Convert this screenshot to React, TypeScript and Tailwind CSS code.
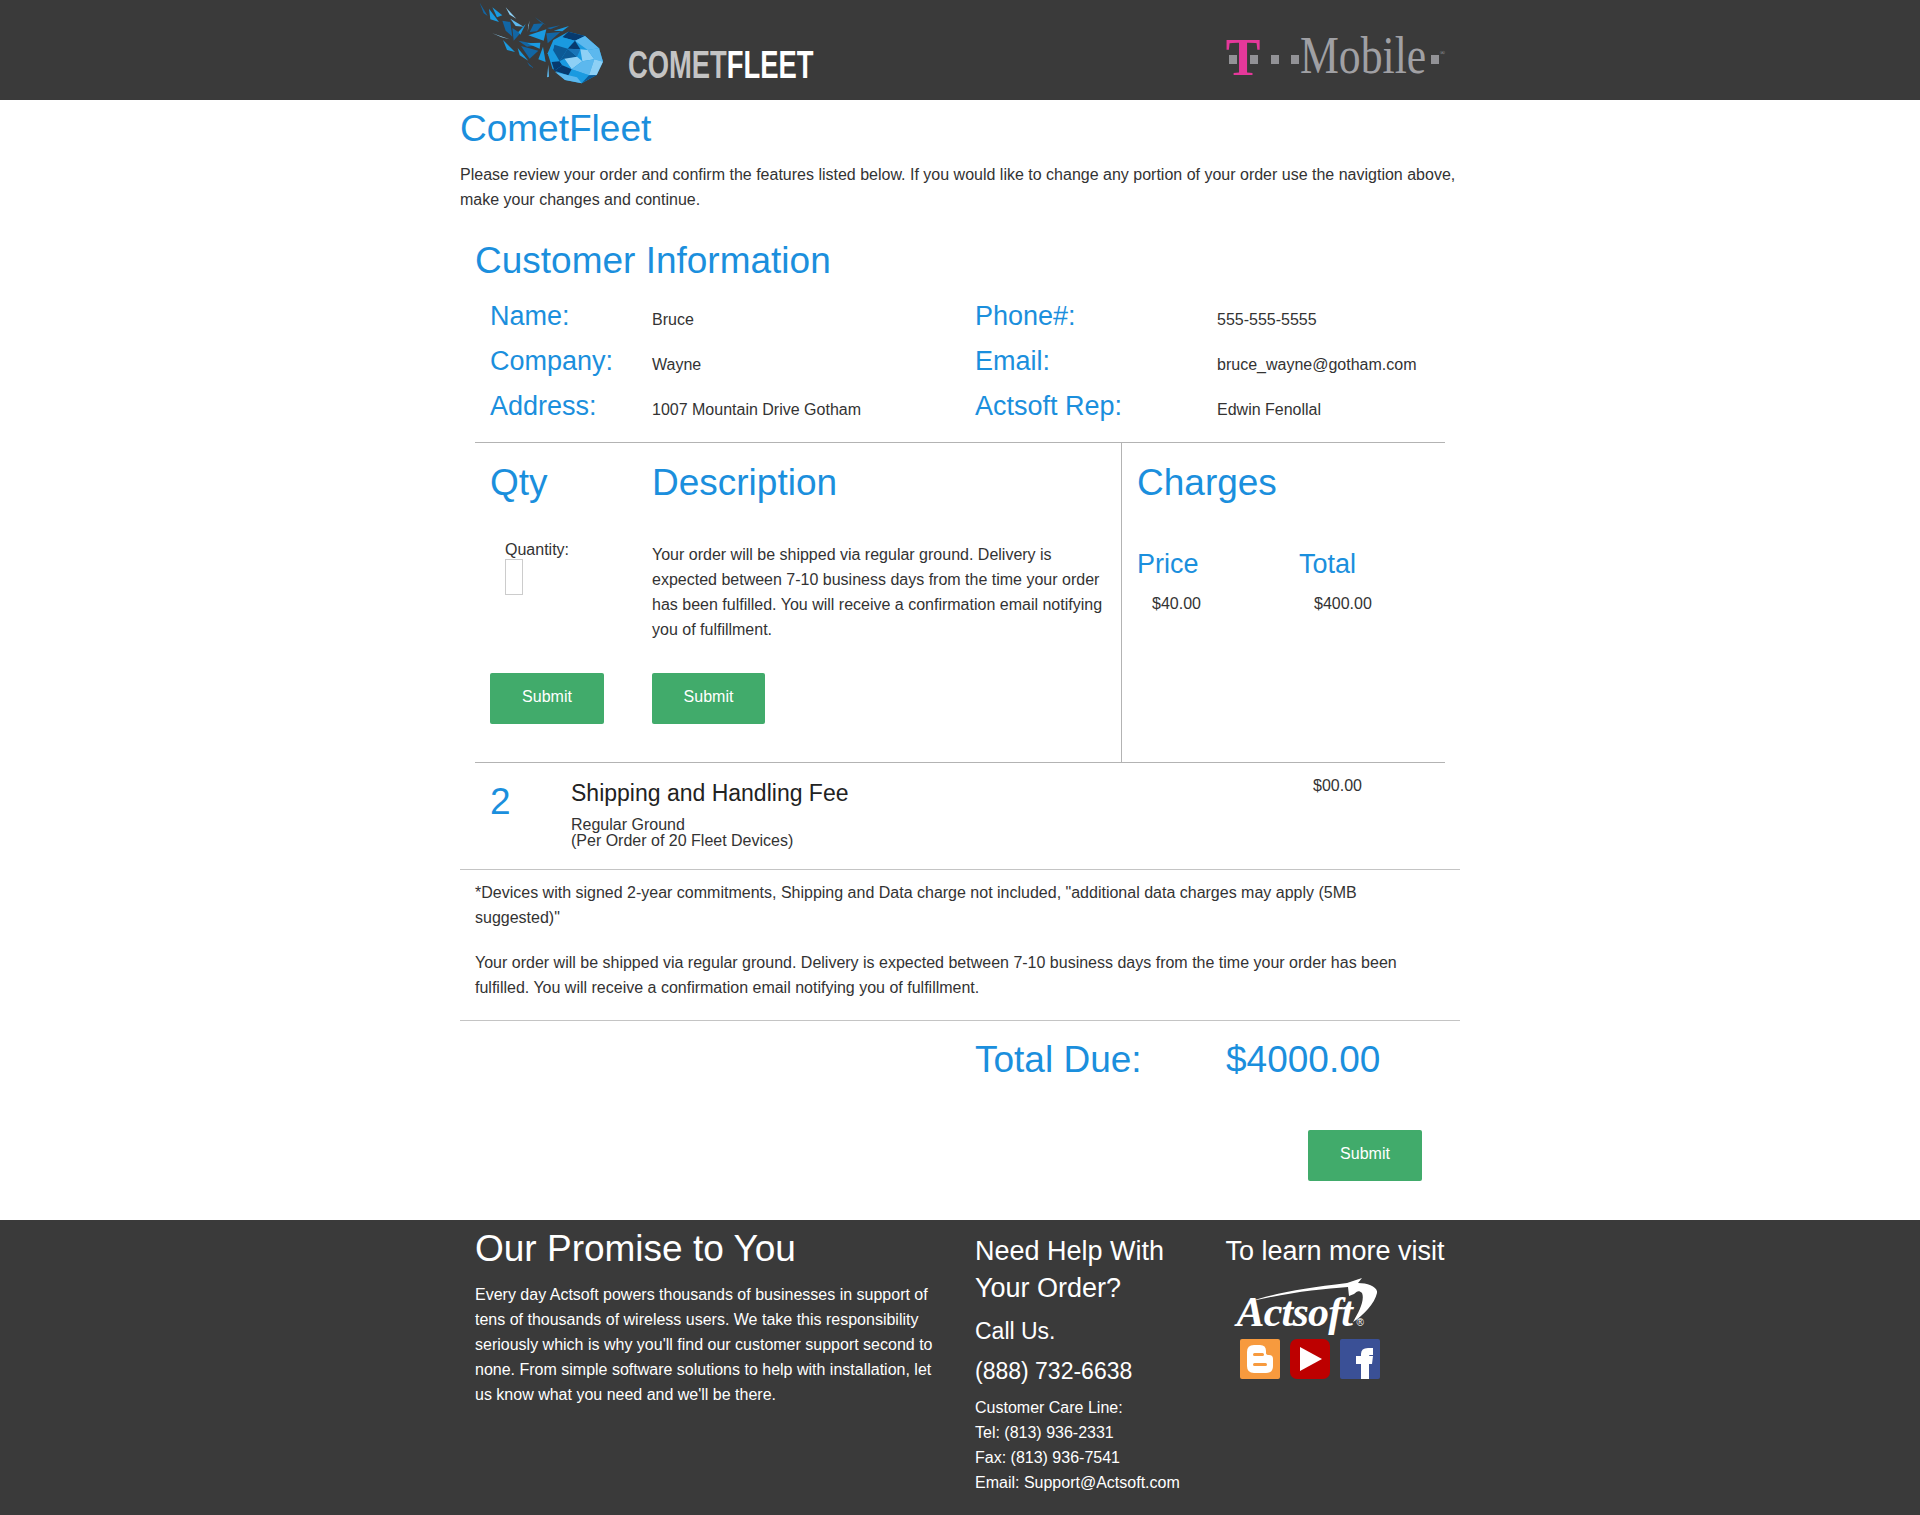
const sans = "font-['Liberation_Sans',Arial,sans-serif]";

function SubmitButton({ wide }: { wide?: boolean }) {
  return (
    <button
      className={`${wide ? "w-[114px]" : "w-[113px]"} h-[51px] bg-[#41ab6b] rounded-[2px] text-white text-[16px] leading-[46px] pb-[3px]`}
    >
      Submit
    </button>
  );
}

function Comet() {
  const tail: [string, string][] = [
    ["14,8 38,48 26,40", "#1266a4"],
    ["42,26 72,66 46,58", "#1a9ae0"],
    ["52,22 82,46 66,52", "#1a9ae0"],
    ["92,22 124,56 104,44", "#8ed0f5"],
    ["106,56 146,80 122,78", "#5cb8ee"],
    ["82,62 106,66 112,110 92,92", "#1266a4"],
    ["112,84 136,100 116,122", "#1266a4"],
    ["152,72 136,104 130,96", "#1a9ae0"],
    ["164,62 158,96 160,76", "#8ed0f5"],
    ["180,52 214,76 196,66", "#1266a4"],
    ["164,96 176,72 206,70 186,94", "#1266a4"],
    ["160,106 214,88 206,122", "#1a9ae0"],
    ["52,100 104,118 80,112", "#8ed0f5"],
    ["84,120 120,156 96,150", "#1a9ae0"],
    ["130,122 196,134 156,140", "#1266a4"],
    ["156,130 196,128 194,146", "#1a9ae0"],
    ["128,144 160,182 134,166", "#1a9ae0"],
    ["138,138 190,152 164,176", "#1266a4"],
    ["214,100 256,96 218,130", "#1266a4"],
    ["216,84 256,76 226,88", "#1266a4"],
    ["236,92 282,78 262,94", "#1a9ae0"],
    ["204,140 212,186 190,178", "#1a9ae0"],
    ["156,186 176,204 164,198", "#1266a4"],
    ["220,194 222,230 216,232", "#5cb8ee"],
  ];
  const facets: [string, string][] = [
    ["280,95 330,108 372,145 384,185 365,225 320,250 270,240 232,205 218,160 235,120", "#1a9ae0"],
    ["280,95 330,108 300,122 262,112", "#073a6e"],
    ["262,112 300,122 278,146 238,134", "#1a9ae0"],
    ["238,134 278,146 254,184 234,150", "#0c5a96"],
    ["218,160 238,134 234,150 230,186", "#1a9ae0"],
    ["230,186 254,184 262,196 238,212", "#073a6e"],
    ["300,122 330,108 372,145 338,150", "#5cb8ee"],
    ["278,146 300,122 316,148", "#073a6e"],
    ["254,184 278,146 306,170", "#0c5a96"],
    ["278,146 316,148 306,170", "#1a75b8"],
    ["316,148 338,150 358,178 322,184", "#8ed0f5"],
    ["338,150 372,145 384,185 358,178", "#5cb8ee"],
    ["306,170 322,184 290,208 268,176", "#8ed0f5"],
    ["254,184 268,176 290,208 262,196", "#1a9ae0"],
    ["238,212 262,196 290,208 280,226", "#073a6e"],
    ["322,184 358,178 342,226 290,208", "#5cb8ee"],
    ["358,178 384,185 365,225 342,226", "#8ed0f5"],
    ["290,208 342,226 320,250 306,232", "#1a9ae0"],
    ["280,226 306,232 320,250 270,240 240,216", "#5cb8ee"],
    ["320,250 342,226 365,225", "#0c5a96"],
  ];
  return (
    <svg viewBox="0 0 420 270" className="w-[140px] h-[90px] shrink-0">
      {tail.map(([points, fill], i) => (
        <polygon key={i} points={points} fill={fill} />
      ))}
      {facets.map(([points, fill], i) => (
        <polygon key={i} points={points} fill={fill} />
      ))}
    </svg>
  );
}

function TMobile() {
  const square = "w-[8px] h-[9px] bg-[#929296]";
  return (
    <div className="flex items-center h-[60px] text-[#a0a0a4] font-['Liberation_Serif',serif]">
      <div className="relative w-[29px] flex justify-between mt-[5px]">
        <span className={square} />
        <span className={square} />
        <span className="absolute left-[-3px] w-[35px] top-[-23px] text-center text-[#e5389a] text-[52px] leading-[52px] font-bold">
          T
        </span>
      </div>
      <span className={`${square} ml-[13px] mt-[5px]`} />
      <span className={`${square} ml-[12px] mt-[5px]`} />
      <span className="w-[125px] ml-[1px] mb-[2px] text-[52px] leading-[60px] origin-left scale-x-[0.84] whitespace-nowrap">
        Mobile
      </span>
      <span className={`${square} ml-[6px] mt-[5px]`} />
      <span className="text-[7px] leading-none mb-[8px] ml-[1px]">®</span>
    </div>
  );
}

function Actsoft() {
  return (
    <div className="relative w-[142px] h-[55px] ml-[9px] mt-[8px]">
      <svg viewBox="0 0 142 55" className="absolute left-0 top-0 w-[142px] h-[55px]">
        <path
          d="M13 24 C40 15 70 10 112 5 L127 0 L123 5 C133 5 143 9 142 15 C140 25 128 38 118 44 C124 34 130 22 127 15 C124 12 122 13 119 16 L114 18 L113 9 C85 11 50 15 13 24 Z"
          fill="#fff"
        />
      </svg>
      <span className="absolute left-[2px] top-[12px] text-white italic font-bold font-['Liberation_Serif',serif] text-[42px] leading-[44px] tracking-[-0.8px]">
        Actsoft
      </span>
      <span className="absolute left-[122px] top-[40px] text-white text-[10px] leading-none">®</span>
    </div>
  );
}

function Socials() {
  return (
    <div className="flex gap-[10px] pl-[14px] pt-[6px]">
      <svg viewBox="0 0 40 40" className="w-[40px] h-[40px]">
        <rect width="40" height="40" rx="2" fill="#f79a3e" />
        <path
          d="M14 6 H20 Q26 6 26 12 V14 Q26 16 29 16 Q33 16 33 20 V27 Q33 34 26 34 H14 Q7 34 7 27 V13 Q7 6 14 6 Z"
          fill="#fff"
        />
        <rect x="13" y="14" width="11" height="3" rx="1.5" fill="#f79a3e" />
        <rect x="13" y="24" width="14" height="3" rx="1.5" fill="#f79a3e" />
      </svg>
      <svg viewBox="0 0 40 40" className="w-[40px] h-[40px]">
        <rect width="40" height="40" rx="7" fill="#bd0000" />
        <polygon points="10,8 32,20 10,32" fill="#fff" />
      </svg>
      <svg viewBox="0 0 40 40" className="w-[40px] h-[40px]">
        <rect width="40" height="40" rx="2" fill="#3a5096" />
        <path d="M21 40 V25 H16 V17 H21 V15 Q21 9 28 9 H33 V16 H30 Q29 16 29 17 H33 L32 25 H29 V40 Z" fill="#fff" />
      </svg>
    </div>
  );
}

export default function App() {
  const heading = "text-[37px] leading-[40px] text-[#1b8fdd]";
  const label = "text-[27px] leading-[45px] text-[#1b8fdd]";
  const value = "text-[16px] leading-[39px] pt-[6px] text-[#333]";

  return (
    <div className={`${sans} text-[16px] text-[#333] bg-white min-h-[1515px]`}>
      <header className="bg-[#3a3a3a] h-[100px]">
        <div className="w-[1000px] mx-auto flex justify-between px-[15px]">
          <div className="flex">
            <Comet />
            <span className="w-[186px] text-[38px] leading-[40px] font-bold mt-[45px] ml-[13px] origin-left scale-x-[0.72] whitespace-nowrap text-[#c4c4c4]">
              COMET<span className="text-white">FLEET</span>
            </span>
          </div>
          <div className="pt-[27px]">
            <TMobile />
          </div>
        </div>
      </header>

      <main className="w-[1000px] mx-auto">
        <h1 className={`${heading} mt-[9px]`}>CometFleet</h1>
        <p className="leading-[25px] mt-[13px]">
          Please review your order and confirm the features listed below. If you would like to change any portion of
          your order use the navigtion above, make your changes and continue.
        </p>

        <section className="px-[15px] mt-[29px]">
          <h2 className={heading}>Customer Information</h2>
          <div className="grid grid-cols-[162px_323px_242px_1fr] pl-[15px] mt-[13px] mb-[13px]">
            <div className={label}>Name:</div>
            <div className={value}>Bruce</div>
            <div className={label}>Phone#:</div>
            <div className={value}>555-555-5555</div>
            <div className={label}>Company:</div>
            <div className={value}>Wayne</div>
            <div className={label}>Email:</div>
            <div className={value}>bruce_wayne@gotham.com</div>
            <div className={label}>Address:</div>
            <div className={value}>1007 Mountain Drive Gotham</div>
            <div className={label}>Actsoft Rep:</div>
            <div className={value}>Edwin Fenollal</div>
          </div>

          <div className="flex h-[321px] border-y border-[#b3b3b3]">
            <div className="w-[647px] border-r border-[#b3b3b3] pl-[15px] pt-[20px] grid grid-cols-[162px_1fr] grid-rows-[40px_170px_51px]">
              <div className={heading}>Qty</div>
              <div className={heading}>Description</div>
              <div className="pl-[15px] pt-[38px]">
                <div className="leading-[18px] text-[16px]">Quantity:</div>
                <input className="block w-[18px] h-[36px] border border-[#ccc] bg-white" />
              </div>
              <p className="pt-[39px] leading-[25px] pr-[14px]">
                Your order will be shipped via regular ground. Delivery is expected between 7-10 business days from the
                time your order has been fulfilled. You will receive a confirmation email notifying you of fulfillment.
              </p>
              <SubmitButton wide />
              <SubmitButton />
            </div>
            <div className="flex-1 pl-[15px] pt-[20px]">
              <div className={heading}>Charges</div>
              <div className="grid grid-cols-[162px_1fr] mt-[45px]">
                <div className="text-[27px] leading-[32px] text-[#1b8fdd]">Price</div>
                <div className="text-[27px] leading-[32px] text-[#1b8fdd]">Total</div>
                <div className="pl-[15px] mt-[14px] leading-[20px]">$40.00</div>
                <div className="pl-[15px] mt-[14px] leading-[20px]">$400.00</div>
              </div>
            </div>
          </div>

          <div className="flex h-[106px] pl-[15px]">
            <div className="w-[81px] text-[37px] leading-[40px] text-[#1b8fdd] pt-[19px]">2</div>
            <div className="w-[742px] pt-[15px]">
              <div className="text-[23px] leading-[30px] text-[#222]">Shipping and Handling Fee</div>
              <div className="leading-[16px] mt-[9px]">
                Regular Ground
                <br />
                (Per Order of 20 Fleet Devices)
              </div>
            </div>
            <div className="pt-[13px] leading-[20px]">$00.00</div>
          </div>
        </section>

        <div className="border-y border-[#c4c4c4] h-[152px] px-[15px] pt-[10px]">
          <p className="leading-[25px]">
            *Devices with signed 2-year commitments, Shipping and Data charge not included, "additional data charges may
            apply (5MB suggested)"
          </p>
          <p className="leading-[25px] mt-[20px]">
            Your order will be shipped via regular ground. Delivery is expected between 7-10 business days from the time
            your order has been fulfilled. You will receive a confirmation email notifying you of fulfillment.
          </p>
        </div>

        <div className="flex pl-[515px] pt-[17px] text-[37px] leading-[44px] text-[#1b8fdd]">
          <div className="w-[251px]">Total Due:</div>
          <div>$4000.00</div>
        </div>
        <div className="flex justify-end pr-[38px] mt-[48px]">
          <SubmitButton wide />
        </div>
      </main>

      <footer className="bg-[#3a3a3a] h-[295px] mt-[39px] text-white">
        <div className="w-[1000px] mx-auto flex pl-[15px]">
          <div className="w-[500px] pr-[30px]">
            <h3 className="text-[37px] leading-[40px] mt-[9px]">Our Promise to You</h3>
            <p className="leading-[25px] mt-[13px] w-[470px]">
              Every day Actsoft powers thousands of businesses in support of tens of thousands of wireless users. We
              take this responsibility seriously which is why you'll find our customer support second to none. From
              simple software solutions to help with installation, let us know what you need and we'll be there.
            </p>
          </div>
          <div className="w-[250.5px]">
            <div className="text-[27px] leading-[37px] mt-[13px]">
              Need Help With
              <br />
              Your Order?
            </div>
            <div className="text-[23px] leading-[30px] mt-[9px]">Call Us.</div>
            <div className="text-[23px] leading-[30px] mt-[10px]">(888) 732-6638</div>
            <div className="leading-[25px] mt-[9px]">
              Customer Care Line:
              <br />
              Tel: (813) 936-2331
              <br />
              Fax: (813) 936-7541
              <br />
              Email: Support@Actsoft.com
            </div>
          </div>
          <div>
            <div className="text-[27px] leading-[37px] mt-[13px]">To learn more visit</div>
            <Actsoft />
            <Socials />
          </div>
        </div>
      </footer>
    </div>
  );
}
